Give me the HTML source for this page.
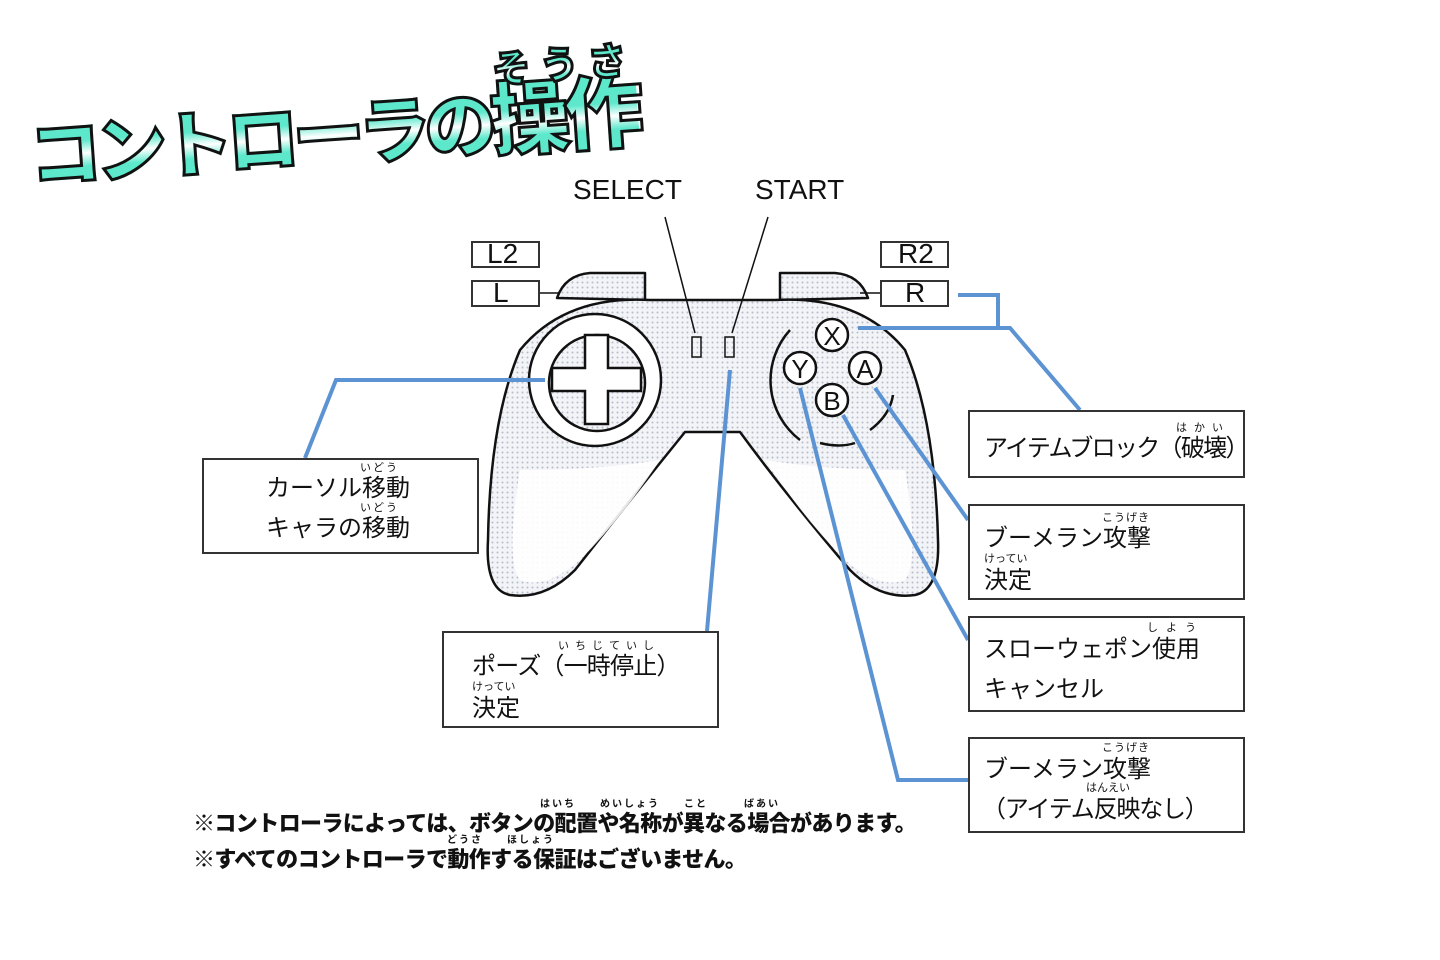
<!DOCTYPE html>
<html><head><meta charset="utf-8"><style>
body{margin:0;width:1440px;height:960px;background:#fff;position:relative;overflow:hidden;font-family:"Liberation Sans","Noto Sans CJK JP",sans-serif;color:#111}
.a{position:absolute;white-space:nowrap}
.box{position:absolute;border:2px solid #333;background:#fff;box-sizing:border-box}
.t{position:absolute;font-size:24px;line-height:1;white-space:nowrap;font-family:"Noto Sans CJK JP",sans-serif}
.r{position:absolute;font-size:11px;line-height:1;letter-spacing:2px;white-space:nowrap;font-family:"Noto Sans CJK JP",sans-serif}
.title{font-family:"Noto Sans CJK JP",sans-serif;font-weight:900;-webkit-text-stroke:3px #111;paint-order:stroke fill;background:linear-gradient(#5de8cc 0%,#5de8cc 45%,#fff 60%,#5de8cc 75%);-webkit-background-clip:text;background-clip:text;-webkit-text-fill-color:transparent}
.note{font-family:"Noto Sans CJK JP",sans-serif;font-weight:900;font-size:22px;letter-spacing:-0.6px;-webkit-text-stroke:5px #fff;paint-order:stroke fill;color:#111}
</style></head><body>

<div class="a title" style="left:32px;top:104px;font-size:72px;transform:rotate(-4deg);transform-origin:left bottom;letter-spacing:-6px;line-height:1.1">コントローラの<span style="font-size:80px">操作</span></div>
<div class="a title" style="left:492px;top:34px;font-size:38px;letter-spacing:10px;transform:rotate(-4deg)">そうさ</div>

<div class="a" style="left:573px;top:174px;font-size:28px">SELECT</div>
<div class="a" style="left:755px;top:174px;font-size:28px">START</div>

<svg class="a" style="left:0;top:0" width="1440" height="960">
<defs><pattern id="d" width="5" height="5" patternUnits="userSpaceOnUse"><rect width="5" height="5" fill="#f3f4f7"/><circle cx="2.5" cy="2.5" r="1" fill="#b7bccb"/></pattern></defs>
<g stroke="#111" stroke-width="2.5" fill="url(#d)" stroke-linejoin="round">
<path d="M557 298 Q565 275 590 273 L645 273 L645 300 Z"/>
<path d="M868 298 Q860 275 835 273 L780 273 L780 300 Z"/>
<path d="M650 300 L775 300 Q860 295 905 350 Q935 420 938 540 Q940 590 915 595 Q880 600 850 570 Q790 500 740 432 L685 432 Q630 500 575 570 Q545 600 510 595 Q485 590 488 540 Q490 420 520 350 Q565 295 650 300 Z"/>
</g>
<g fill="#fff" stroke="none">
<path d="M520 470 Q505 560 520 580 Q545 590 580 560 Q620 520 660 460 Q600 470 520 470Z" opacity=".9"/>
<path d="M905 470 Q920 560 905 580 Q880 590 845 560 Q805 520 765 460 Q825 470 905 470Z" opacity=".9"/>
</g>
<circle cx="595" cy="380" r="66" fill="#fff" stroke="#111" stroke-width="2.5"/>
<circle cx="597" cy="383" r="48" fill="url(#d)" stroke="#111" stroke-width="2.5"/>
<path d="M585 335 h23 v33 h33 v23 h-33 v33 h-23 v-33 h-33 v-23 h33z" fill="#fff" stroke="#111" stroke-width="2.5"/>
<path d="M790 330 A75 75 0 0 0 800 440 M820 443 Q840 448 855 443 M870 430 Q890 415 893 395" fill="none" stroke="#111" stroke-width="2.5"/>
<rect x="692" y="337" width="9" height="20" fill="url(#d)" stroke="#111" stroke-width="1.5"/>
<rect x="725" y="337" width="9" height="20" fill="url(#d)" stroke="#111" stroke-width="1.5"/>
<line x1="665" y1="217" x2="695" y2="333" stroke="#111" stroke-width="1.5"/>
<line x1="768" y1="217" x2="732" y2="333" stroke="#111" stroke-width="1.5"/>
<line x1="540" y1="293" x2="560" y2="293" stroke="#111" stroke-width="1.5"/>
<line x1="860" y1="293" x2="880" y2="293" stroke="#111" stroke-width="1.5"/>
<g fill="#fff" stroke="#111" stroke-width="2.5">
<circle cx="832" cy="335" r="16"/><circle cx="800" cy="368" r="16"/><circle cx="865" cy="368" r="16"/><circle cx="832" cy="400" r="16"/></g>
<g font-family="Liberation Sans" font-size="26" text-anchor="middle" fill="#111">
<text x="832" y="345">X</text><text x="800" y="378">Y</text><text x="865" y="378">A</text><text x="832" y="410">B</text></g>
<g stroke="#5b93d3" stroke-width="4" fill="none">
<path d="M545 380 L336 380 L305 458"/>
<path d="M730 370 L707 631"/>
<path d="M858 328 L1010 328 L1080 410"/>
<path d="M958 295 L998 295 L998 328"/>
<path d="M875 388 L968 520"/>
<path d="M843 415 L968 640"/>
<path d="M800 388 L898 780 L968 780"/>
</g>
</svg>

<div class="box" style="left:471px;top:241px;width:69px;height:27px"></div><div class="a" style="left:487px;top:238px;font-size:28px">L2</div>
<div class="box" style="left:471px;top:280px;width:69px;height:27px"></div><div class="a" style="left:493px;top:277px;font-size:28px">L</div>
<div class="box" style="left:880px;top:241px;width:69px;height:27px"></div><div class="a" style="left:898px;top:238px;font-size:28px">R2</div>
<div class="box" style="left:880px;top:280px;width:69px;height:27px"></div><div class="a" style="left:905px;top:277px;font-size:28px">R</div>

<div class="box" style="left:202px;top:458px;width:277px;height:96px"></div>
<div class="t" style="left:266px;top:474px">カーソル移動</div><div class="r" style="left:360px;top:462px">いどう</div>
<div class="t" style="left:266px;top:514px">キャラの移動</div><div class="r" style="left:360px;top:502px">いどう</div>

<div class="box" style="left:442px;top:631px;width:277px;height:97px"></div>
<div class="t" style="left:472px;top:652px;letter-spacing:-0.8px">ポーズ（一時停止）</div><div class="r" style="left:558px;top:640px;letter-spacing:6px">いちじていし</div>
<div class="t" style="left:472px;top:694px">決定</div><div class="r" style="left:472px;top:681px;letter-spacing:0">けってい</div>

<div class="box" style="left:968px;top:410px;width:277px;height:68px"></div>
<div class="t" style="left:984px;top:434px;letter-spacing:-1.7px">アイテムブロック（破壊）</div><div class="r" style="left:1176px;top:422px;letter-spacing:7px">はかい</div>

<div class="box" style="left:968px;top:504px;width:277px;height:96px"></div>
<div class="t" style="left:984px;top:524px">ブーメラン攻撃</div><div class="r" style="left:1102px;top:512px;letter-spacing:1px">こうげき</div>
<div class="t" style="left:984px;top:566px">決定</div><div class="r" style="left:984px;top:553px;letter-spacing:0">けってい</div>

<div class="box" style="left:968px;top:616px;width:277px;height:96px"></div>
<div class="t" style="left:984px;top:635px">スローウェポン使用</div><div class="r" style="left:1147px;top:622px;letter-spacing:8px">しよう</div>
<div class="t" style="left:984px;top:675px">キャンセル</div>

<div class="box" style="left:968px;top:737px;width:277px;height:96px"></div>
<div class="t" style="left:984px;top:755px">ブーメラン攻撃</div><div class="r" style="left:1102px;top:742px;letter-spacing:1px">こうげき</div>
<div class="t" style="left:982px;top:795px;letter-spacing:-1.2px">（アイテム反映なし）</div><div class="r" style="left:1086px;top:782px;letter-spacing:0">はんえい</div>

<div class="a note" style="left:193px;top:806px">※コントローラによっては、ボタンの配置や名称が異なる場合があります。</div>
<div class="r" style="left:540px;top:798px;font-weight:bold;font-size:10px">はいち　　めいしょう　　こと　　　ばあい</div>
<div class="a note" style="left:193px;top:842px">※すべてのコントローラで動作する保証はございません。</div>
<div class="r" style="left:447px;top:834px;font-weight:bold;font-size:10px">どうさ　　ほしょう</div>
</body></html>
